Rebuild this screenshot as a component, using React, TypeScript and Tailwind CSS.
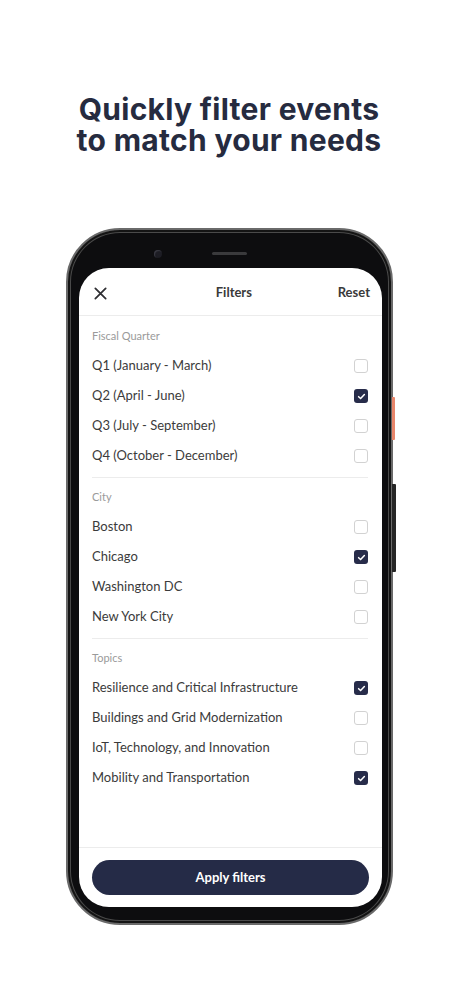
import React from 'react';

type Row = { label: string; checked: boolean };
type Section = { title: string; rows: Row[] };

const sections: Section[] = [
  {
    title: 'Fiscal Quarter',
    rows: [
      { label: 'Q1 (January - March)', checked: false },
      { label: 'Q2 (April - June)', checked: true },
      { label: 'Q3 (July - September)', checked: false },
      { label: 'Q4 (October - December)', checked: false },
    ],
  },
  {
    title: 'City',
    rows: [
      { label: 'Boston', checked: false },
      { label: 'Chicago', checked: true },
      { label: 'Washington DC', checked: false },
      { label: 'New York City', checked: false },
    ],
  },
  {
    title: 'Topics',
    rows: [
      { label: 'Resilience and Critical Infrastructure', checked: true },
      { label: 'Buildings and Grid Modernization', checked: false },
      { label: 'IoT, Technology, and Innovation', checked: false },
      { label: 'Mobility and Transportation', checked: true },
    ],
  },
];

const Checkbox: React.FC<{ checked: boolean }> = ({ checked }) =>
  checked ? (
    <div className="w-[14px] h-[14px] rounded-[3px] bg-[#272c4a] flex items-center justify-center">
      <svg width="9" height="9" viewBox="0 0 10 10" fill="none">
        <path d="M1.8 5.2 L4 7.3 L8.2 2.8" stroke="white" strokeWidth="1.7" strokeLinecap="round" strokeLinejoin="round" />
      </svg>
    </div>
  ) : (
    <div className="w-[14px] h-[14px] rounded-[3px] border border-[#d2d2d2] bg-white" />
  );

const App: React.FC = () => {
  return (
    <div className="w-[462px] h-[1000px] bg-white overflow-hidden">
      <h1 className="pt-[94px] pr-[4px] text-center text-[30px] leading-[31px] font-bold tracking-[0.3px] text-[#262b3f] font-['Inter',sans-serif]">
        Quickly filter events
        <br />
        to match your needs
      </h1>

      <div className="relative ml-[66px] mt-[72px] w-[327px] h-[697px] rounded-[54px] bg-[#0d0d0f] border-[2px] border-[#6a6a6a] shadow-[inset_0_0_0_2px_#141414,inset_0_0_0_3px_#4a4a4a]">
        {/* side buttons */}
        <div className="absolute right-[-4px] top-[167px] w-[3px] h-[43px] bg-[#e8866b] rounded-r-[1px]" />
        <div className="absolute right-[-5px] top-[254px] w-[4px] h-[88px] bg-[#262626] rounded-r-[1px]" />

        {/* top bezel */}
        <div className="relative h-[38px]">
          <div className="absolute left-[86px] top-[20px] w-[8px] h-[8px] rounded-full bg-[#1d1d24] shadow-[inset_1px_1px_1px_#3b3b44]" />
          <div className="absolute left-[144px] top-[22px] w-[35px] h-[3px] rounded-full bg-[#3a3a3c]" />
        </div>

        {/* screen */}
        <div className="ml-[11px] mr-[9px] h-[639px] rounded-[30px] bg-white overflow-hidden flex flex-col font-['Lato',sans-serif]">
          <div className="h-[48px] pt-[3px] flex items-center justify-between pl-[14px] pr-[12px] border-b border-[#ececec]">
            <svg width="15" height="15" viewBox="0 0 16 16" fill="none">
              <path d="M2.5 2.5 L13.5 13.5 M13.5 2.5 L2.5 13.5" stroke="#2f2f33" strokeWidth="1.9" strokeLinecap="round" />
            </svg>
            <span className="text-[13px] font-bold text-[#3a3a3a] ml-[22px]">Filters</span>
            <span className="text-[13px] font-bold text-[#3a3a3a]">Reset</span>
          </div>

          <div className="pl-[13px] pr-[14px] pt-[6px]">
            {sections.map((s, i) => (
              <div
                key={s.title}
                className={
                  i < sections.length - 1
                    ? 'pb-[7px] mb-[5px] border-b border-[#ececec]'
                    : ''
                }
              >
                <div className="h-[28px] flex items-center text-[11px] text-[#9a9a9a]">{s.title}</div>
                {s.rows.map((r) => (
                  <div key={r.label} className="h-[30px] pt-[2px] flex items-center justify-between">
                    <span className="text-[13px] text-[#3b3b3b]">{r.label}</span>
                    <Checkbox checked={r.checked} />
                  </div>
                ))}
              </div>
            ))}
          </div>

          <div className="mt-auto border-t border-[#ececec] px-[13px] pt-[12px] pb-[12px]">
            <button className="w-full h-[35px] rounded-full bg-[#252b47] text-white text-[13px] font-bold">
              Apply filters
            </button>
          </div>
        </div>
      </div>
    </div>
  );
};

export default App;
